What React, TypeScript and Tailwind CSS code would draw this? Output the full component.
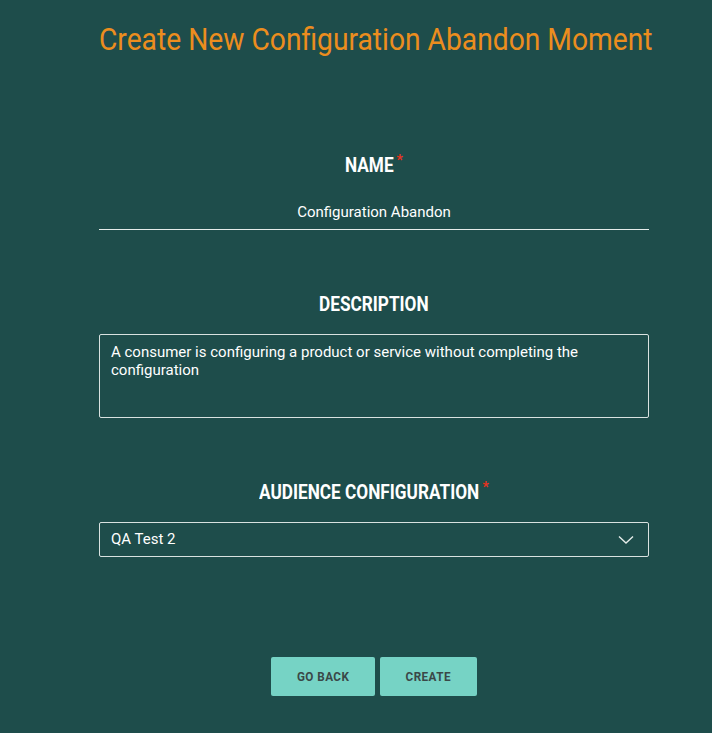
import React from "react";

export default function App() {
  return (
    <div className="min-h-screen w-full bg-[#1e4d4b]" style={{ fontFamily: "Roboto, 'Liberation Sans', sans-serif" }}>
      <div className="ml-[99px] flex w-[550px] flex-col items-center pt-[18px]">
        <h1 className="text-[31px] leading-[44px] font-normal text-[#ec8d1e] whitespace-nowrap">
          <span className="inline-block origin-left scale-x-[0.91] mr-[-59px]">Create New Configuration Abandon Moment</span>
        </h1>

        <div className="mt-[91px] flex items-start text-[21px] leading-[24px] font-bold text-white">
          <span className="inline-block origin-left scale-x-[0.82] mr-[-11px]">NAME</span>
          <span className="ml-[3px] text-[14px] leading-[14px] text-[#e8321e]">*</span>
        </div>
        <div className="mt-[26px] w-full border-b border-[#e6ecea] pb-[8px] text-center text-[15px] leading-[18px] text-white">
          Configuration Abandon
        </div>

        <div className="mt-[62px] flex text-[21px] leading-[24px] font-bold text-white">
          <span className="inline-block origin-left scale-x-[0.82] mr-[-24px]">DESCRIPTION</span>
        </div>
        <div className="mt-[18px] h-[84px] w-full rounded-[2px] border border-[#d9e2e0] px-[11px] pt-[8px] text-[15px] leading-[18px] text-white">
          A consumer is configuring a product or service without completing the configuration
        </div>

        <div className="mt-[62px] flex items-start text-[21px] leading-[24px] font-bold text-white">
          <span className="inline-block origin-left scale-x-[0.82] mr-[-48px]">AUDIENCE CONFIGURATION</span>
          <span className="ml-[3px] text-[14px] leading-[14px] text-[#e8321e]">*</span>
        </div>
        <div className="mt-[18px] flex h-[35px] w-full items-center justify-between rounded-[2px] border border-[#d9e2e0] px-[11px] text-[15px] text-white">
          <span>QA Test 2</span>
          <svg width="16" height="10" viewBox="0 0 16 10" className="mr-[3px]">
            <path d="M1 1.5 L8 8 L15 1.5" fill="none" stroke="#e6ecea" strokeWidth="1.4" />
          </svg>
        </div>

        <div className="mt-[100px] flex gap-[5px]">
          <button className="h-[39px] w-[104px] rounded-[2px] bg-[#76d3c5] text-[13px] font-bold tracking-[0.5px] text-[#3a4848]">
            <span className="inline-block scale-x-[0.9]">GO BACK</span>
          </button>
          <button className="h-[39px] w-[97px] rounded-[2px] bg-[#76d3c5] text-[13px] font-bold tracking-[0.5px] text-[#3a4848]">
            <span className="inline-block scale-x-[0.9]">CREATE</span>
          </button>
        </div>
      </div>
    </div>
  );
}
